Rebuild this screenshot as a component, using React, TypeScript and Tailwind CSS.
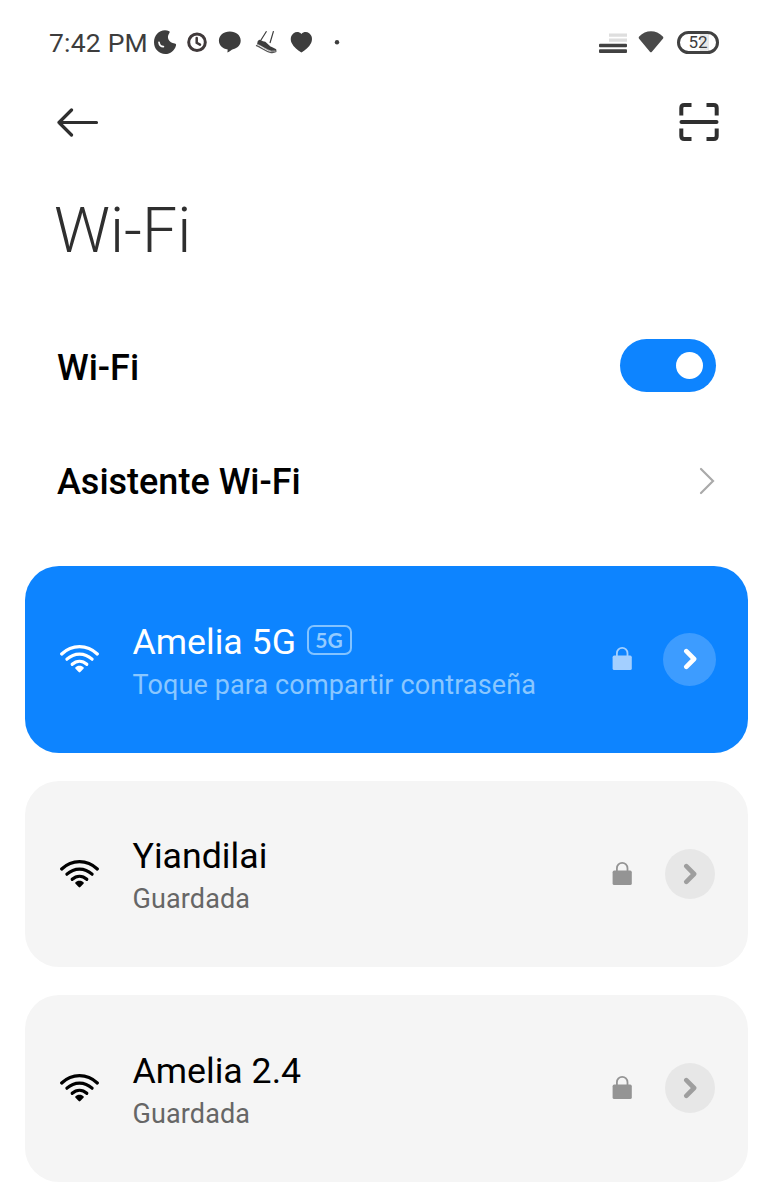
import clsx from "clsx"

interface Network {
  name: string
  status: string
  connected?: boolean
  badge?: string
}

const networks: Network[] = [
  { name: "Amelia 5G", status: "Toque para compartir contraseña", connected: true, badge: "5G" },
  { name: "Yiandilai", status: "Guardada" },
  { name: "Amelia 2.4", status: "Guardada" },
]

function StatusIcons() {
  return (
    <svg width="190" height="30" viewBox="152 28 190 30" className="shrink-0" fill="#3d3d3d">
      {/* Moon */}
      <path d="M169.300 31.200C161 28 154 34.500 154 42.300 154 49 159 54 165.300 54c5 0 9.200-3.300 10.700-8.600.3-1.100-.2-1.800-1.300-1.900-2.900-.2-5.100-1.700-6.200-4-.9-2-.7-3.900.6-6 .6-1 .9-1.900.2-2.300Z" />
      <path d="M159 42.300c.4 2.700 1.900 4.300 4.400 4.300" fill="none" stroke="white" strokeWidth="1.700" strokeLinecap="round" />
      {/* Clock */}
      <circle cx="197" cy="42.300" r="8.300" fill="none" stroke="#40393a" strokeWidth="3" />
      <path d="M196.700 38v4.800l3.300 1.800" fill="none" stroke="#40393a" strokeWidth="2.500" strokeLinecap="round" />
      {/* Speech bubble */}
      <path d="M229.800 31.500c6.200 0 10.900 3.800 10.900 9 0 4.600-3.200 7.700-7.700 8.700-1.500.5-3.300 2.100-5.600 3.400l.3-3.200c-5.200-.5-8.800-4-8.800-8.800 0-5.300 4.700-9.100 10.900-9.100Z" />
      {/* Running shoe */}
      <path d="M266.500 31.200 261 40M273.500 31.200 270 43" fill="none" stroke="#3d3d3d" strokeWidth="1.200" />
      <path d="M257.700 41.300c.8-1 1.800-1.600 3-1.400 1.500.9 3 1.600 4.600 1.900l5.200 4.600c1.600.6 4 1.700 5.700 2.800l.3 2.300-4.200.7c-5.700-1.600-9.600-5.700-15.300-7.700Z" />
      <path d="M256 45.400c5.300 2 8.800 5.500 14.200 7 2 .5 4.200.2 6-.8" fill="none" stroke="#555" strokeWidth="1.200" />
      <path d="M257.300 44.300c5.200 2.100 9 5.600 14 6.900l4.200-.2" fill="none" stroke="white" strokeWidth=".6" />
      {/* Heart */}
      <path d="M301.400 34c2-2.200 5.300-2.600 7.800-.8 2.900 2.200 3.600 6.100 1.900 9.800-1.900 4-6.300 7.400-9.700 9.500-3.400-2.100-7.800-5.500-9.700-9.500-1.700-3.700-1-7.600 1.900-9.800 2.500-1.800 5.800-1.400 7.800.8Z" />
      <circle cx="337" cy="42.300" r="2.200" />
    </svg>
  )
}

function SignalIcons() {
  return (
    <svg width="66" height="24" viewBox="598 30.500 66 24" className="shrink-0" fill="#414141">
      <path d="M609 33h18v3.200h-18zM609 38h18v3.200h-18z" fill="#dedede" />
      <rect x="599" y="43.200" width="28" height="3.600" rx="1" />
      <rect x="599" y="48.800" width="28" height="3.600" rx="1" />
      <path d="M639.200 36c6.500-7 17-7 23.600 0 .7.700.7 1.500.1 2.200l-11 13q-1 1-2 0l-10.800-13c-.6-.7-.5-1.500.1-2.200Z" fill="#4a4a4a" />
    </svg>
  )
}

function WifiIcon() {
  return (
    <svg width="40" height="30" viewBox="0 0 40 30" fill="none" stroke="currentColor" strokeWidth="3.200" strokeLinecap="round">
      <path d="M2.700 10C13 .2 28 .2 38.300 10" />
      <path d="M7.900 15.200c7.400-6.900 17.800-6.900 25.200 0" />
      <path d="M13.200 20.300c4.400-4 10.200-4 14.600 0" />
      <path d="M20.500 21.800c1.900 0 3.200.6 4 1.500.4.500.4.900 0 1.400l-3.200 3.400q-.8.700-1.600 0l-3.200-3.400c-.4-.5-.4-.9 0-1.400.8-.9 2.100-1.500 4-1.500Z" fill="currentColor" stroke="none" />
    </svg>
  )
}

function LockIcon() {
  return (
    <svg width="20" height="24" viewBox="0 0 20 24" fill="currentColor">
      <path d="M4.900 10V6.200a5.300 5.300 0 0 1 10.600 0V10" fill="none" stroke="currentColor" strokeWidth="1.800" />
      <rect x=".6" y="8.600" width="19.200" height="14.400" rx="1.600" />
    </svg>
  )
}

function NetworkCard({ network }: { network: Network }) {
  const { name, status, connected, badge } = network

  return (
    <div
      className={clsx(
        "flex h-[186.5px] items-center rounded-[34px] pr-8 pl-[34px]",
        connected ? "bg-[#0d84ff] text-white" : "bg-[#f5f5f5] text-black",
      )}
    >
      <WifiIcon />
      <div className="mt-[8px] ml-[33.5px] flex-1">
        <div className="flex h-[43px] items-center">
          <span className="text-[35.7px] leading-[43px]">{name}</span>
          {badge && (
            <span className="mb-[5px] ml-[11px] flex h-[30px] w-[45px] items-center justify-center rounded-[7px] border-2 border-[#83c3ff] pr-px font-[Lato,sans-serif] text-[21px] leading-none font-bold text-[#93cbff]">
              {badge}
            </span>
          )}
        </div>
        <p className={clsx("text-[27px] leading-[42px] tracking-[0.12px]", connected ? "text-[#8ac7ff]" : "text-[#666666]")}>{status}</p>
      </div>
      <div className={connected ? "text-[#a3cfff]" : "text-[#949494]"}>
        <LockIcon />
      </div>
      <div className="ml-[31px] flex w-[53px] justify-center">
        <div
          className={clsx(
            "flex items-center justify-center rounded-full",
            connected ? "size-[53px] bg-[#3d9cff]" : "size-[50px] bg-[#e7e7e7] text-[#9e9e9e]",
          )}
        >
          <svg width="14" height="22" viewBox="0 0 14 22" fill="none" stroke="currentColor" strokeWidth="4.600" strokeLinecap="round" strokeLinejoin="round">
            <path d="m3.300 3.200 7.800 7.800-7.800 7.800" />
          </svg>
        </div>
      </div>
    </div>
  )
}

export default function App() {
  return (
    <div className="h-[1200px] w-[773px] overflow-hidden bg-white font-[Roboto,sans-serif] text-black">
      {/* Status bar */}
      <div className="flex h-[85px] items-center justify-between pr-[54px] pl-[49px] text-[#3d3d3d]">
        <div className="flex items-center">
          <span className="w-[103px] pt-px text-[26.5px] tracking-[0.2px] whitespace-nowrap">7:42 PM</span>
          <StatusIcons />
        </div>
        <div className="flex items-center gap-[13px]">
          <SignalIcons />
          <span className="flex h-[23px] w-[42px] items-center justify-center rounded-full border-[3px] border-[#414141] bg-[linear-gradient(90deg,#fff_55%,#e8e8e8_55%,#e8e8e8_80%,#fff_80%)] text-[17px] leading-none">
            52
          </span>
        </div>
      </div>

      {/* Toolbar */}
      <div className="flex h-[74px] items-center justify-between pr-[53px] pl-14 text-[#2f2f2f]">
        <svg width="44" height="30" viewBox="0 0 44 30" fill="none" stroke="currentColor" strokeWidth="3.200" strokeLinecap="round" strokeLinejoin="round">
          <path d="M40.500 15.500H3M15.500 3 3 15.500 15.500 28" />
        </svg>
        <svg width="42" height="40" viewBox="0 0 42 40" fill="none" stroke="currentColor" strokeWidth="4">
          <path d="M3.300 13.500V6q0-3 3-3h7.200M28.500 3h7.200q3 0 3 3v7.500M38.700 26.500V34q0 3-3 3h-7.200M13.500 37H6.300q-3 0-3-3v-7.500" />
          <path d="M3.500 20h35" strokeLinecap="round" />
        </svg>
      </div>

      <h1 className="flex h-[142px] items-center pt-0.5 pl-[54px] text-[62.5px] font-light text-[#2f2f2f]">Wi-Fi</h1>

      <div className="flex h-[129px] items-center justify-between px-[57px]">
        <span className="pt-1 text-[36px] font-medium">Wi-Fi</span>
        <div className="flex h-[53px] w-24 items-center justify-end rounded-full bg-[#0d84ff] pr-[13px]">
          <div className="size-[27px] rounded-full bg-white" />
        </div>
      </div>

      <div className="flex h-[101px] items-center justify-between px-[57px]">
        <span className="pt-[3px] text-[36px] font-medium">Asistente Wi-Fi</span>
        <svg width="18" height="30" viewBox="0 0 18 30" fill="none" stroke="#aaaaaa" strokeWidth="2.200" strokeLinecap="round">
          <path d="m3 3 12 12L3 27" />
        </svg>
      </div>

      <div className="flex flex-col gap-7 px-[25px] pt-[35px]">
        {networks.map((network) => (
          <NetworkCard key={network.name} network={network} />
        ))}
      </div>
    </div>
  )
}
